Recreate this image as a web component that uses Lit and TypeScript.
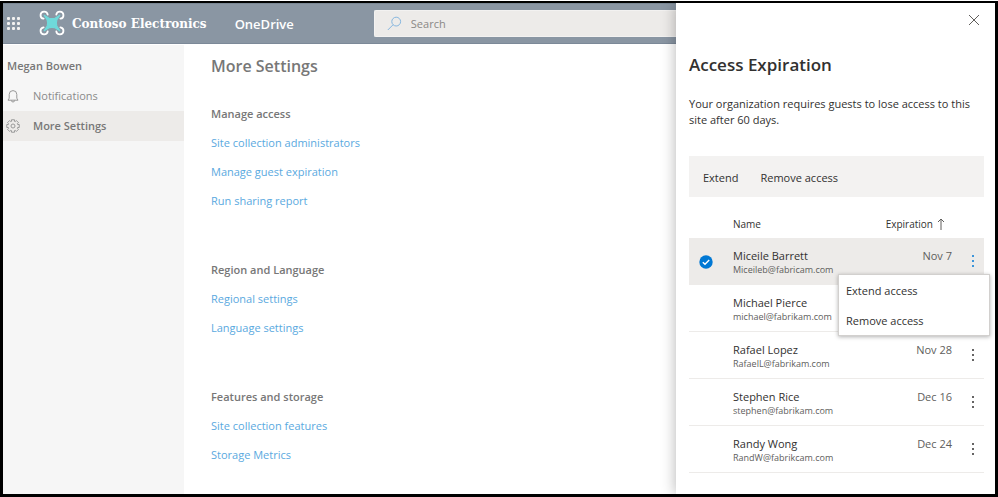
import { LitElement, html, svg, css, nothing } from "lit";
import { customElement, state } from "lit/decorators.js";
import { classMap } from "lit/directives/class-map.js";

interface Guest {
  name: string;
  email: string;
  date: string;
}

const GUESTS: Guest[] = [
  { name: "Miceile Barrett", email: "Miceileb@fabricam.com", date: "Nov 7" },
  { name: "Michael Pierce", email: "michael@fabrikam.com", date: "" },
  { name: "Rafael Lopez", email: "RafaelL@fabrikam.com", date: "Nov 28" },
  { name: "Stephen Rice", email: "stephen@fabrikam.com", date: "Dec 16" },
  { name: "Randy Wong", email: "RandW@fabrikcam.com", date: "Dec 24" },
];

const GROUPS = [
  {
    title: "Manage access",
    links: ["Site collection administrators", "Manage guest expiration", "Run sharing report"],
  },
  { title: "Region and Language", links: ["Regional settings", "Language settings"] },
  { title: "Features and storage", links: ["Site collection features", "Storage Metrics"] },
];

const gearPath = (() => {
  const pts: string[] = [];
  for (let i = 0; i < 8; i++) {
    const a = (i * Math.PI) / 4;
    for (const [d, r] of [[-0.3, 4.9], [-0.24, 6.4], [0.24, 6.4], [0.3, 4.9]]) {
      pts.push(`${(7 + r * Math.cos(a + d)).toFixed(2)} ${(7 + r * Math.sin(a + d)).toFixed(2)}`);
    }
  }
  return `M${pts.join("L")}Z`;
})();

@customElement("app-root")
export class AppRoot extends LitElement {
  @state() private selected = 0;
  @state() private menuRow = 0;

  static styles = css`
    :host {
      display: flex;
      box-sizing: border-box;
      margin-top: 1px;
      min-height: calc(100vh - 1px);
      border: 3px solid #000;
      border-top-width: 2px;
      overflow: hidden;
      background: #fff;
      color: #323130;
      font: 11px/16px "Open Sans", "Noto Sans", sans-serif;
    }
    * { box-sizing: border-box; }
    h1, h2, h3, p, ul { margin: 0; padding: 0; }
    ul { list-style: none; }
    a { text-decoration: none; color: inherit; }
    svg { display: block; fill: none; stroke: currentColor; flex: none; }
    button {
      border: 0;
      padding: 0;
      background: none;
      color: inherit;
      font: inherit;
      text-align: left;
      cursor: pointer;
    }
    .site { flex: 1; min-width: 0; display: flex; flex-direction: column; }
    .bar {
      display: flex;
      align-items: center;
      height: 41px;
      padding-left: 4px;
      background: #8a96a3;
      border-top: 1px solid #7a8794;
      border-bottom: 1px solid #7c8998;
      color: #fff;
    }
    .waffle { color: #f3f2f1; }
    .brand {
      display: flex;
      align-items: center;
      gap: 7px;
      margin-left: 19px;
      font: 700 12px/20px "DejaVu Serif", serif;
      white-space: nowrap;
    }
    .brand svg { margin-top: -2px; }
    .product { margin-left: 28px; font-size: 13px; font-weight: 600; }
    .search {
      flex: 1;
      display: flex;
      align-items: center;
      gap: 9px;
      height: 27px;
      margin-left: 80px;
      padding-left: 12px;
      border: 1px solid #f3f2f1;
      border-right: 0;
      border-radius: 2px 0 0 2px;
      background: #edebe9;
      color: #85b6df;
    }
    .search input {
      flex: 1;
      min-width: 0;
      border: 0;
      padding: 0;
      outline: 0;
      background: none;
      font: inherit;
      color: #797775;
    }
    .search input::placeholder { color: #8a8886; opacity: 1; }
    .body { flex: 1; display: flex; }
    .side {
      width: 181px;
      flex: none;
      margin-top: 1px;
      padding-top: 6px;
      background: #f6f6f6;
      color: #777;
    }
    .side h2 { padding-left: 4px; font-size: 11px; line-height: 30px; font-weight: 600; }
    .side a {
      display: flex;
      align-items: center;
      gap: 13px;
      height: 30px;
      padding-left: 3px;
      color: #8a8a8a;
    }
    .side a.on { background: #edebe9; color: #777; font-weight: 600; }
    .side svg { color: #999; }
    .main { flex: 1; padding: 10px 27px 24px; color: #777; }
    .main h1 { font-size: 16px; line-height: 24px; font-weight: 600; }
    .group { margin-top: 40px; line-height: 29px; }
    h1 + .group { margin-top: 21px; }
    .group h2 { font-size: 11px; line-height: 29px; font-weight: 600; }
    .group a { color: #5aa9e0; }
    .panel {
      position: relative;
      width: 319px;
      flex: none;
      padding: 7px 11px 20px 13px;
      background: #fff;
      box-shadow: 0 0 14px rgba(0, 0, 0, 0.3);
    }
    .close { display: block; margin-left: auto; padding: 4px; color: #605e5c; }
    .panel h2 { margin-top: 23px; font-size: 17px; line-height: 24px; font-weight: 600; }
    .note { margin-top: 19px; }
    .tools {
      display: flex;
      gap: 22px;
      height: 41px;
      margin-top: 28px;
      padding: 2px 14px 0;
      background: #f3f2f1;
    }
    table { width: 100%; border-collapse: separate; border-spacing: 0; table-layout: fixed; }
    th { height: 41px; padding: 19px 0 0; font-size: 10px; line-height: 16px; font-weight: 400; text-align: left; vertical-align: top; }
    th svg { display: inline-block; vertical-align: -2px; margin-left: 4px; color: #605e5c; }
    th, .date { white-space: nowrap; }
    .right { text-align: right; }
    thead .right { padding-right: 7px; }
    .c-check { width: 44px; }
    .c-date { width: 108px; }
    .c-more { width: 32px; }
    td { height: 47px; padding: 0; vertical-align: middle; border-bottom: 1px solid #edebe9; }
    .sel td { background: #edebe9; }
    .name, .mail { display: block; }
    .name { padding-top: 2px; line-height: 16px; }
    .mail { font-size: 9px; line-height: 12px; color: #605e5c; }
    .date { padding-top: 10px; text-align: right; vertical-align: top; color: #605e5c; }
    .more { position: relative; }
    .dots { display: block; padding: 4px 8px 4px 19px; }
    .sel .dots { color: #0078d4; }
    .pick {
      appearance: none;
      display: block;
      width: 14px;
      height: 14px;
      margin: 2px 0 0 10px;
      border-radius: 50%;
    }
    .check { position: relative; }
    .check svg { position: absolute; left: 10px; top: 17px; pointer-events: none; }
    .menu {
      position: absolute;
      z-index: 2;
      top: 36px;
      right: -6px;
      width: 152px;
      border: 1px solid #d2d0ce;
      background: #fff;
      box-shadow: 0 1px 4px rgba(0, 0, 0, 0.3);
    }
    .menu button { display: block; width: 100%; padding: 1px 7px 0; line-height: 29px; }
  `;

  private waffle() {
    const dots = [0, 1, 2].flatMap((r) =>
      [0, 1, 2].map((c) => svg`<rect x=${c * 5} y=${r * 5} width="3" height="3" rx="1" />`));
    return html`<button class="waffle" aria-label="App launcher">
      <svg width="13" height="13" style="fill:currentColor;stroke:none">${dots}</svg>
    </button>`;
  }

  private logo() {
    const arm = "M4.6 8.7A3.6 3.6 0 1 1 8.7 4.6";
    return html`<svg width="26" height="26" viewBox="0 0 26 26" aria-hidden="true">
      <g stroke="#fff" stroke-width="1.8" stroke-linecap="round">
        <path d=${arm} />
        <path d=${arm} transform="matrix(-1 0 0 1 26 0)" />
        <path d=${arm} transform="matrix(1 0 0 -1 0 26)" />
        <path d=${arm} transform="matrix(-1 0 0 -1 26 26)" />
      </g>
      <path fill="#6fd9da" stroke="#6fd9da" stroke-width="1.2" stroke-linejoin="round"
        d="M5.2 5.2L10 8.2Q13 9.2 16 8.2L20.8 5.2L17.8 10Q16.8 13 17.8 16L20.8 20.8L16 17.8Q13 16.8 10 17.8L5.2 20.8L8.2 16Q9.2 13 8.2 10Z" />
    </svg>`;
  }

  private row(g: Guest, i: number) {
    const sel = i === this.selected;
    return html`<tr class=${classMap({ sel })}>
      <td class="check">
        <input class="pick" type="checkbox" aria-label="Select ${g.name}" .checked=${sel}
          @change=${() => (this.selected = sel ? -1 : i)} />
        ${sel
          ? html`<svg width="14" height="14" viewBox="0 0 14 14" aria-hidden="true">
              <circle cx="7" cy="7" r="6.7" fill="#0078d4" stroke="none" />
              <path d="M3.8 7.2L6 9.3L10.2 5" stroke="#fff" stroke-width="1.4" />
            </svg>`
          : nothing}
      </td>
      <td><span class="name">${g.name}</span><span class="mail">${g.email}</span></td>
      <td class="date">${g.date}</td>
      <td class="more">
        <button class="dots" aria-label="More actions for ${g.name}"
          @click=${() => (this.menuRow = this.menuRow === i ? -1 : i)}>
          <svg width="4" height="14" style="fill:currentColor;stroke:none">
            <circle cx="2" cy="2" r="1" /><circle cx="2" cy="7" r="1" /><circle cx="2" cy="12" r="1" />
          </svg>
        </button>
        ${i === this.menuRow
          ? html`<div class="menu" role="menu">
              <button role="menuitem">Extend access</button>
              <button role="menuitem">Remove access</button>
            </div>`
          : nothing}
      </td>
    </tr>`;
  }

  render() {
    return html`
      <div class="site">
        <header class="bar">
          ${this.waffle()}
          <div class="brand">${this.logo()}<span>Contoso Electronics</span></div>
          <span class="product">OneDrive</span>
          <label class="search">
            <svg width="15" height="15" viewBox="0 0 15 15" aria-hidden="true">
              <circle cx="9.2" cy="5.6" r="4.4" /><path d="M6 8.8L0.8 14" />
            </svg>
            <input type="search" placeholder="Search" aria-label="Search" />
          </label>
        </header>
        <div class="body">
          <nav class="side">
            <h2>Megan Bowen</h2>
            <a href="#notifications">
              <svg width="14" height="14" viewBox="0 0 14 14" aria-hidden="true">
                <path d="M2 11.2H12L10.8 9.2V5.4A3.8 3.8 0 0 0 3.2 5.4V9.2ZM5.4 11.4A1.6 1.6 0 0 0 8.6 11.4" />
              </svg>
              Notifications
            </a>
            <a class="on" href="#more">
              <svg width="14" height="14" viewBox="0 0 14 14" aria-hidden="true">
                <path d=${gearPath} stroke-linejoin="round" /><circle cx="7" cy="7" r="2" />
              </svg>
              More Settings
            </a>
          </nav>
          <main class="main">
            <h1>More Settings</h1>
            ${GROUPS.map((g) => html`<section class="group">
              <h2>${g.title}</h2>
              <ul>${g.links.map((l) => html`<li><a href="#settings">${l}</a></li>`)}</ul>
            </section>`)}
          </main>
        </div>
      </div>
      <aside class="panel">
        <button class="close" aria-label="Close">
          <svg width="12" height="12" viewBox="0 0 12 12"><path d="M1 1L11 11M11 1L1 11" /></svg>
        </button>
        <h2>Access Expiration</h2>
        <p class="note">Your organization requires guests to lose access to this site after 60 days.</p>
        <div class="tools"><button>Extend</button><button>Remove access</button></div>
        <table>
          <colgroup><col class="c-check" /><col /><col class="c-date" /><col class="c-more" /></colgroup>
          <thead>
            <tr>
              <th></th>
              <th>Name</th>
              <th class="right">Expiration<svg width="8" height="12" viewBox="0 0 8 12" aria-hidden="true"><path d="M4 12V1M1 4L4 1L7 4" /></svg></th>
              <th></th>
            </tr>
          </thead>
          <tbody>${GUESTS.map((g, i) => this.row(g, i))}</tbody>
        </table>
      </aside>
    `;
  }
}
